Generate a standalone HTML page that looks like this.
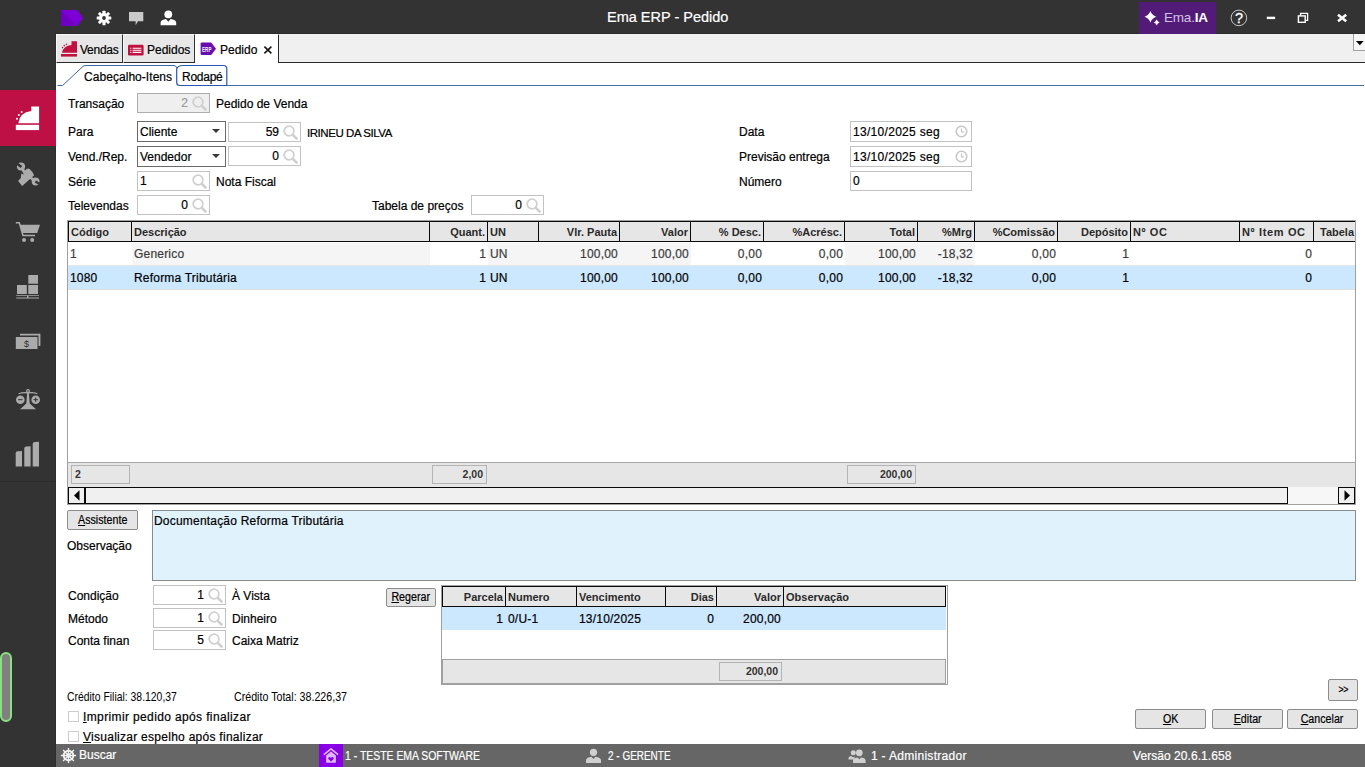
<!DOCTYPE html>
<html lang="pt-BR">
<head>
<meta charset="utf-8">
<title>Ema ERP - Pedido</title>
<style>
*{box-sizing:border-box;margin:0;padding:0}
html,body{width:1365px;height:767px;overflow:hidden;background:#fff}
body{position:relative;font-family:"Liberation Sans",sans-serif;font-size:12px;color:#000;-webkit-text-stroke:.2px}
.a{position:absolute}
.t{position:absolute;white-space:nowrap;line-height:16px;height:16px}
.titlebar{left:0;top:0;width:1365px;height:34px;background:#333}
.sidebar{left:0;top:0;width:56px;height:767px;background:#333}
.tabbar{left:56px;top:34px;width:1309px;height:29px;background:#f0f0f0;border-bottom:1px solid #2a2a2a}
.tab{position:absolute;top:34px;height:29px;background:#e7e7e7;border-top:1px solid #f8f8f8;border-left:1px solid #f8f8f8;border-right:1px solid #333;border-bottom:1px solid #2a2a2a;font-size:12px;line-height:30px;white-space:nowrap;color:#000}
.tab.on{background:#fff;border-bottom:none;border-top-color:#fff;border-left:none;border-right:1px solid #2a2a2a;height:29px}
.inp{position:absolute;height:20px;border:1px solid #c2c2c2;background:#fff;font-size:12px;line-height:19px;white-space:nowrap}
.inp.r{text-align:right;padding-right:21px}
.inp.l{padding-left:2px}
.sel{position:absolute;height:21px;border:1px solid #6a6a6a;background:#fff;line-height:21px;padding-left:2px;white-space:nowrap}
.mag{position:absolute;right:2px;top:2px;width:15px;height:15px}
.btn{position:absolute;background:#e5e5e5;border:1px solid #8c8c8c;border-radius:2px;text-align:center;font-size:12px;white-space:nowrap}
.btn span{display:inline-block;transform:scaleX(.89)}
.btn u{text-decoration:underline}
.hd,.hd2,b{-webkit-text-stroke:0}
.hd{position:absolute;top:222px;height:19px;background:#e6e6e6;font-weight:bold;font-size:11px;letter-spacing:0;color:#2a2a2a;line-height:20px;white-space:nowrap;overflow:hidden}
.hd.r{text-align:right;padding-right:2px}.c.r{text-align:right;padding-right:2px}
.hd.l{padding-left:2px}.c.l{padding-left:2px}
.c{position:absolute;height:23px;line-height:23px;white-space:nowrap;overflow:hidden;letter-spacing:.2px}
.g{background:#f5f5f5}
.hd2{position:absolute;top:587px;height:19px;background:#e6e6e6;border-right:1px solid #0a0a0a;font-weight:bold;font-size:11px;letter-spacing:0;color:#2a2a2a;line-height:20px;white-space:nowrap}
.sb{position:absolute;top:744px;height:23px;line-height:24px;color:#fff;white-space:nowrap;font-size:12px;transform-origin:0 50%}
</style>
</head>
<body>
<!-- chrome -->
<div class="a titlebar"></div>
<div class="a sidebar"></div>
<div class="a" style="left:0;top:481px;width:56px;height:1px;background:#2c2c2c"></div>
<div class="a" style="left:55px;top:33px;width:1310px;height:1px;background:#2c2c2c"></div>
<div class="a" style="left:55px;top:33px;width:1px;height:734px;background:#2e2e2e"></div>
<div class="a" style="left:0;top:90px;width:56px;height:56px;background:#be1044"></div>
<div class="a" style="left:0;top:652px;width:12px;height:70px;background:#808080;border:2px solid #88e080;border-radius:6px"></div>

<div class="t" style="left:607px;top:8px;width:121px;text-align:center;color:#fff;font-size:14.5px;line-height:18px;height:18px;letter-spacing:0">Ema ERP - Pedido</div>

<!-- tab bar -->
<div class="a tabbar"></div>
<div class="tab" style="left:56px;width:67px;padding-left:23px;letter-spacing:-.25px">Vendas</div>
<div class="tab" style="left:123px;width:72px;padding-left:23px">Pedidos</div>
<div class="tab on" style="left:195px;width:84px;padding-left:25px">Pedido</div>


<!-- status bar -->
<div class="a" style="left:56px;top:744px;width:1309px;height:23px;background:#666"></div>
<div class="a" style="left:319px;top:744px;width:24px;height:23px;background:#8a00e6"></div>
<div class="sb" style="left:79px;line-height:23px">Buscar</div>
<div class="sb" style="left:345px;transform:scaleX(.869)">1 - TESTE EMA SOFTWARE</div>
<div class="sb" style="left:608px;transform:scaleX(.83)">2 - GERENTE</div>
<div class="sb" style="left:871px;letter-spacing:.3px">1 - Administrador</div>
<div class="sb" style="left:1133px;letter-spacing:.06px">Versão 20.6.1.658</div>

<!-- sub tabs -->
<svg class="a" style="left:56px;top:64px" width="1309" height="23" viewBox="0 0 1309 23">
<path d="M170.800 21.500H1308" stroke="#4a6ea8" stroke-width="1" fill="none"/>
<path d="M1.500 21.500H6.600L26.500 2.800Q27.800 1.500 30 1.500H118Q120 1.500 120.700 4" stroke="#3f66a6" stroke-width="1" fill="none"/>
<path d="M127 1.500Q121.500 1.500 120.700 5V18.500Q120.700 21.500 123.700 21.500H170.800V5Q170.800 1.500 167.500 1.500Z" stroke="#2555b5" stroke-width="1.200" fill="none"/>
</svg>
<div class="t" style="left:84px;top:69px;letter-spacing:.05px">Cabeçalho-Itens</div>
<div class="t" style="left:182px;top:69px;letter-spacing:-.25px">Rodapé</div>

<!-- header form -->
<div class="t" style="left:68px;top:96px">Transação</div>
<div class="inp r" style="left:137px;top:93px;width:73px;background:#efefef;border-color:#adadad;color:#9a9a9a">2<svg class="mag" viewBox="0 0 14 14"><circle cx="5.600" cy="5.600" r="4.500" fill="none" stroke="#d0d0d0" stroke-width="1.700"/><path d="M9.200 9.200L12.600 12.600" stroke="#d0d0d0" stroke-width="2.500" stroke-linecap="round"/></svg></div>
<div class="t" style="left:216px;top:96px">Pedido de Venda</div>

<div class="t" style="left:68px;top:124px">Para</div>
<div class="sel" style="left:137px;top:121px;width:89px">Cliente<svg class="a" style="right:5px;top:7px" width="8" height="4" viewBox="0 0 8 4"><path d="M0 0H8L4 4Z" fill="#3a3a3a"/></svg></div>
<div class="inp r" style="left:228px;top:122px;width:73px">59<svg class="mag" viewBox="0 0 14 14"><circle cx="5.600" cy="5.600" r="4.500" fill="none" stroke="#d0d0d0" stroke-width="1.700"/><path d="M9.200 9.200L12.600 12.600" stroke="#d0d0d0" stroke-width="2.500" stroke-linecap="round"/></svg></div>
<div class="t" style="left:307px;top:125px;font-size:11.500px;letter-spacing:-.45px">IRINEU DA SILVA</div>

<div class="t" style="left:68px;top:149px">Vend./Rep.</div>
<div class="sel" style="left:137px;top:146px;width:89px">Vendedor<svg class="a" style="right:5px;top:7px" width="8" height="4" viewBox="0 0 8 4"><path d="M0 0H8L4 4Z" fill="#3a3a3a"/></svg></div>
<div class="inp r" style="left:228px;top:146px;width:73px">0<svg class="mag" viewBox="0 0 14 14"><circle cx="5.600" cy="5.600" r="4.500" fill="none" stroke="#d0d0d0" stroke-width="1.700"/><path d="M9.200 9.200L12.600 12.600" stroke="#d0d0d0" stroke-width="2.500" stroke-linecap="round"/></svg></div>

<div class="t" style="left:68px;top:174px">Série</div>
<div class="inp l" style="left:137px;top:171px;width:73px">1<svg class="mag" viewBox="0 0 14 14"><circle cx="5.600" cy="5.600" r="4.500" fill="none" stroke="#d0d0d0" stroke-width="1.700"/><path d="M9.200 9.200L12.600 12.600" stroke="#d0d0d0" stroke-width="2.500" stroke-linecap="round"/></svg></div>
<div class="t" style="left:216px;top:174px">Nota Fiscal</div>

<div class="t" style="left:68px;top:198px">Televendas</div>
<div class="inp r" style="left:137px;top:195px;width:73px">0<svg class="mag" viewBox="0 0 14 14"><circle cx="5.600" cy="5.600" r="4.500" fill="none" stroke="#d0d0d0" stroke-width="1.700"/><path d="M9.200 9.200L12.600 12.600" stroke="#d0d0d0" stroke-width="2.500" stroke-linecap="round"/></svg></div>
<div class="t" style="left:372px;top:198px">Tabela de preços</div>
<div class="inp r" style="left:471px;top:195px;width:73px">0<svg class="mag" viewBox="0 0 14 14"><circle cx="5.600" cy="5.600" r="4.500" fill="none" stroke="#d0d0d0" stroke-width="1.700"/><path d="M9.200 9.200L12.600 12.600" stroke="#d0d0d0" stroke-width="2.500" stroke-linecap="round"/></svg></div>

<div class="t" style="left:739px;top:124px">Data</div>
<div class="inp l" style="left:850px;top:121px;width:122px;height:21px;line-height:20px;letter-spacing:.3px">13/10/2025 seg<svg class="mag" style="right:3px;top:3px;width:13px;height:13px" viewBox="0 0 13 13"><circle cx="6.500" cy="6.500" r="5.300" fill="none" stroke="#c6c6c6" stroke-width="1.500"/><path d="M6.500 3.600V6.900H9.200" fill="none" stroke="#c6c6c6" stroke-width="1.200"/></svg></div>
<div class="t" style="left:739px;top:149px">Previsão entrega</div>
<div class="inp l" style="left:850px;top:146px;width:122px;height:21px;line-height:20px;letter-spacing:.3px">13/10/2025 seg<svg class="mag" style="right:3px;top:3px;width:13px;height:13px" viewBox="0 0 13 13"><circle cx="6.500" cy="6.500" r="5.300" fill="none" stroke="#c6c6c6" stroke-width="1.500"/><path d="M6.500 3.600V6.900H9.200" fill="none" stroke="#c6c6c6" stroke-width="1.200"/></svg></div>
<div class="t" style="left:739px;top:174px">Número</div>
<div class="inp l" style="left:850px;top:171px;width:122px">0</div>

<!-- items grid -->
<div class="a" style="left:67px;top:220px;width:1289px;height:267px;border:1px solid #a0a0a0;background:#fff"></div>
<div class="a" style="left:68px;top:221px;width:1287px;height:21px;background:#0a0a0a"></div>
<div class="hd l" style="left:69px;width:62px">Código</div>
<div class="hd l" style="left:132px;width:297px">Descrição</div>
<div class="hd r" style="left:430px;width:57px">Quant.</div>
<div class="hd l" style="left:488px;width:50px">UN</div>
<div class="hd r" style="left:539px;width:80px">Vlr. Pauta</div>
<div class="hd r" style="left:620px;width:70px">Valor</div>
<div class="hd r" style="left:691px;width:72px">% Desc.</div>
<div class="hd r" style="left:764px;width:80px">%Acrésc.</div>
<div class="hd r" style="left:845px;width:72px">Total</div>
<div class="hd r" style="left:918px;width:56px">%Mrg</div>
<div class="hd r" style="left:975px;width:82px">%Comissão</div>
<div class="hd r" style="left:1058px;width:72px">Depósito</div>
<div class="hd l" style="left:1131px;width:108px;letter-spacing:.6px">Nº OC</div>
<div class="hd l" style="left:1240px;width:73px;letter-spacing:.65px">Nº Item OC</div>
<div class="hd l" style="left:1314px;width:41px;padding-left:6px">Tabela</div>
<div class="a" style="left:68px;top:265px;width:1287px;height:1px;background:#e6e6e6"></div>
<div class="a" style="left:68px;top:266px;width:1287px;height:23px;background:#cce8ff"></div>
<div class="a" style="left:68px;top:289px;width:1287px;height:1px;background:#dedede"></div>
<div class="c l" style="left:68px;top:243px;width:64px;height:22px;line-height:23px;color:#3c3c3c">1</div>
<div class="c l g" style="left:132px;top:243px;width:298px;height:22px;line-height:23px;color:#3c3c3c">Generico</div>
<div class="c r" style="left:430px;top:243px;width:58px;height:22px;line-height:23px;color:#3c3c3c">1</div>
<div class="c l g" style="left:488px;top:243px;width:51px;height:22px;line-height:23px;color:#3c3c3c">UN</div>
<div class="c r g" style="left:539px;top:243px;width:81px;height:22px;line-height:23px;color:#3c3c3c">100,00</div>
<div class="c r g" style="left:620px;top:243px;width:71px;height:22px;line-height:23px;color:#3c3c3c">100,00</div>
<div class="c r" style="left:691px;top:243px;width:73px;height:22px;line-height:23px;color:#3c3c3c">0,00</div>
<div class="c r" style="left:764px;top:243px;width:81px;height:22px;line-height:23px;color:#3c3c3c">0,00</div>
<div class="c r g" style="left:845px;top:243px;width:73px;height:22px;line-height:23px;color:#3c3c3c">100,00</div>
<div class="c r g" style="left:918px;top:243px;width:57px;height:22px;line-height:23px;color:#3c3c3c">-18,32</div>
<div class="c r" style="left:975px;top:243px;width:83px;height:22px;line-height:23px;color:#3c3c3c">0,00</div>
<div class="c r" style="left:1058px;top:243px;width:73px;height:22px;line-height:23px;color:#3c3c3c">1</div>
<div class="c r" style="left:1240px;top:243px;width:74px;height:22px;line-height:23px;color:#3c3c3c">0</div>
<div class="c l" style="left:68px;top:266px;width:64px;height:23px;line-height:24px">1080</div>
<div class="c l" style="left:132px;top:266px;width:298px;height:23px;line-height:24px">Reforma Tributária</div>
<div class="c r" style="left:430px;top:266px;width:58px;height:23px;line-height:24px">1</div>
<div class="c l" style="left:488px;top:266px;width:51px;height:23px;line-height:24px">UN</div>
<div class="c r" style="left:539px;top:266px;width:81px;height:23px;line-height:24px">100,00</div>
<div class="c r" style="left:620px;top:266px;width:71px;height:23px;line-height:24px">100,00</div>
<div class="c r" style="left:691px;top:266px;width:73px;height:23px;line-height:24px">0,00</div>
<div class="c r" style="left:764px;top:266px;width:81px;height:23px;line-height:24px">0,00</div>
<div class="c r" style="left:845px;top:266px;width:73px;height:23px;line-height:24px">100,00</div>
<div class="c r" style="left:918px;top:266px;width:57px;height:23px;line-height:24px">-18,32</div>
<div class="c r" style="left:975px;top:266px;width:83px;height:23px;line-height:24px">0,00</div>
<div class="c r" style="left:1058px;top:266px;width:73px;height:23px;line-height:24px">1</div>
<div class="c r" style="left:1240px;top:266px;width:74px;height:23px;line-height:24px">0</div>
<div class="a" style="left:68px;top:462px;width:1287px;height:25px;background:#e6e6e6;border-top:1px solid #a8a8a8"></div>
<div class="a" style="left:71px;top:465px;width:59px;height:19px;border:1px solid #b4b4b4;background:#e6e6e6;font-weight:bold;font-size:10.500px;-webkit-text-stroke:0;line-height:17px;color:#333;text-align:left;padding:0 3px">2</div>
<div class="a" style="left:432px;top:465px;width:55px;height:19px;border:1px solid #b4b4b4;background:#e6e6e6;font-weight:bold;font-size:10.500px;-webkit-text-stroke:0;line-height:17px;color:#333;text-align:right;padding:0 3px">2,00</div>
<div class="a" style="left:847px;top:465px;width:69px;height:19px;border:1px solid #b4b4b4;background:#e6e6e6;font-weight:bold;font-size:10.500px;-webkit-text-stroke:0;line-height:17px;color:#333;text-align:right;padding:0 3px">200,00</div>
<div class="a" style="left:67px;top:487px;width:1289px;height:18px;background:#a0a0a0"></div>
<div class="a" style="left:68px;top:487px;width:1287px;height:17px;background:#0a0a0a"></div>
<div class="a" style="left:69px;top:488px;width:15px;height:15px;background:#f0f0f0"></div>
<svg class="a" style="left:74px;top:490px" width="6" height="11" viewBox="0 0 6 11"><path d="M5.500 .3V10.700L0 5.500Z" fill="#000"/></svg>
<div class="a" style="left:86px;top:488px;width:1201px;height:15px;background:#f0f0f0"></div>
<div class="a" style="left:1288px;top:487px;width:50px;height:17px;background:#f7f7f7"></div>
<div class="a" style="left:1339px;top:488px;width:15px;height:15px;background:#f0f0f0"></div>
<svg class="a" style="left:1344px;top:490px" width="6" height="11" viewBox="0 0 6 11"><path d="M.5 .3V10.700L6 5.500Z" fill="#000"/></svg>
<!-- lower -->
<div class="btn" style="left:67px;top:510px;width:71px;height:20px;line-height:18px"><span><u>A</u>ssistente</span></div>
<div class="t" style="left:67px;top:538px">Observação</div>
<div class="a" style="left:152px;top:510px;width:1204px;height:71px;border:1px solid #8a8a8a;background:#e0f2fc;padding:2px 1px;line-height:17px;white-space:nowrap;letter-spacing:.2px">Documentação Reforma Tributária</div>
<div class="t" style="left:68px;top:588px">Condição</div>
<div class="inp r" style="left:153px;top:585px;width:73px">1<svg class="mag" viewBox="0 0 14 14"><circle cx="5.600" cy="5.600" r="4.500" fill="none" stroke="#d0d0d0" stroke-width="1.700"/><path d="M9.200 9.200L12.600 12.600" stroke="#d0d0d0" stroke-width="2.500" stroke-linecap="round"/></svg></div>
<div class="t" style="left:232px;top:588px">À Vista</div>
<div class="t" style="left:68px;top:611px">Método</div>
<div class="inp r" style="left:153px;top:608px;width:73px">1<svg class="mag" viewBox="0 0 14 14"><circle cx="5.600" cy="5.600" r="4.500" fill="none" stroke="#d0d0d0" stroke-width="1.700"/><path d="M9.200 9.200L12.600 12.600" stroke="#d0d0d0" stroke-width="2.500" stroke-linecap="round"/></svg></div>
<div class="t" style="left:232px;top:611px">Dinheiro</div>
<div class="t" style="left:68px;top:633px">Conta finan</div>
<div class="inp r" style="left:153px;top:630px;width:73px">5<svg class="mag" viewBox="0 0 14 14"><circle cx="5.600" cy="5.600" r="4.500" fill="none" stroke="#d0d0d0" stroke-width="1.700"/><path d="M9.200 9.200L12.600 12.600" stroke="#d0d0d0" stroke-width="2.500" stroke-linecap="round"/></svg></div>
<div class="t" style="left:232px;top:633px">Caixa Matriz</div>
<div class="btn" style="left:386px;top:588px;width:50px;height:19px;line-height:17px"><span><u>R</u>egerar</span></div>
<div class="a" style="left:441px;top:585px;width:507px;height:100px;border:1px solid #a0a0a0;background:#fff"></div>
<div class="a" style="left:442px;top:586px;width:504px;height:21px;background:#0a0a0a"></div>
<div class="hd2 r" style="left:443px;width:63px;text-align:right;padding-right:2px">Parcela</div>
<div class="hd2 l" style="left:506px;width:71px;padding-left:2px">Numero</div>
<div class="hd2 l" style="left:577px;width:89px;padding-left:2px">Vencimento</div>
<div class="hd2 r" style="left:666px;width:51px;text-align:right;padding-right:2px">Dias</div>
<div class="hd2 r" style="left:717px;width:67px;text-align:right;padding-right:2px">Valor</div>
<div class="hd2 l" style="left:784px;width:161px;border-right:none;padding-left:2px">Observação</div>
<div class="a" style="left:442px;top:607px;width:504px;height:23px;background:#cce8ff"></div>
<div class="c r" style="left:443px;top:608px;width:62px;height:22px;line-height:22px">1</div>
<div class="c l" style="left:506px;top:608px;width:70px;height:22px;line-height:22px">0/U-1</div>
<div class="c l" style="left:577px;top:608px;width:88px;height:22px;line-height:22px">13/10/2025</div>
<div class="c r" style="left:666px;top:608px;width:50px;height:22px;line-height:22px">0</div>
<div class="c r" style="left:717px;top:608px;width:66px;height:22px;line-height:22px">200,00</div>
<div class="a" style="left:442px;top:659px;width:504px;height:25px;background:#e6e6e6;border:1px solid #a0a0a0"></div>
<div class="a" style="left:719px;top:662px;width:63px;height:19px;border:1px solid #b4b4b4;background:#e6e6e6;font-weight:bold;font-size:10.500px;-webkit-text-stroke:0;line-height:17px;color:#333;text-align:right;padding:0 3px;letter-spacing:0">200,00</div>
<div class="t" style="left:67px;top:689px;font-size:13px;letter-spacing:0;-webkit-text-stroke:0;transform-origin:0 50%;transform:scaleX(.8)">Crédito Filial: 38.120,37</div>
<div class="t" style="left:234px;top:689px;font-size:13px;letter-spacing:0;-webkit-text-stroke:0;transform-origin:0 50%;transform:scaleX(.82)">Crédito Total: 38.226,37</div>
<div class="a" style="left:68px;top:711px;width:11px;height:11px;border:1px solid #cdcdcd;background:#fff"></div>
<div class="t" style="left:83px;top:709px;letter-spacing:.37px"><u>I</u>mprimir pedido após finalizar</div>
<div class="a" style="left:68px;top:731px;width:11px;height:11px;border:1px solid #cdcdcd;background:#fff"></div>
<div class="t" style="left:83px;top:729px;letter-spacing:.27px"><u>V</u>isualizar espelho após finalizar</div>
<div class="btn" style="left:1328px;top:679px;width:30px;height:22px;line-height:20px;font-size:10px;letter-spacing:-.5px"><span>&gt;&gt;</span></div>
<div class="btn" style="left:1135px;top:709px;width:71px;height:20px;line-height:18px"><span><u>O</u>K</span></div>
<div class="btn" style="left:1212px;top:709px;width:71px;height:20px;line-height:18px"><span><u>E</u>ditar</span></div>
<div class="btn" style="left:1287px;top:709px;width:71px;height:20px;line-height:18px"><span><u>C</u>ancelar</span></div>

<!-- title bar icons -->
<svg class="a" style="left:56px;top:0" width="140" height="34" viewBox="56 0 140 34">
<path d="M61 10H77.300L83.300 18L77.300 26H61Z" fill="#7d00d6"/>
<path d="M61 10L77 26H61Z" fill="#6f00c2"/>
<g transform="translate(104 18)" fill="#fff">
<circle r="4.900"/>
<g id="tt"><rect x="-1.500" y="-7.300" width="3" height="14.600" rx=".6"/></g>
<rect x="-1.500" y="-7.300" width="3" height="14.600" rx=".6" transform="rotate(45)"/>
<rect x="-1.500" y="-7.300" width="3" height="14.600" rx=".6" transform="rotate(90)"/>
<rect x="-1.500" y="-7.300" width="3" height="14.600" rx=".6" transform="rotate(135)"/>
<circle r="1.900" fill="#333"/>
</g>
<path d="M129 12H143.300V21.300H138L135.600 25.200V21.300H129Z" fill="#c9c9c9"/>
<circle cx="168.300" cy="14.300" r="3.900" fill="#fff"/>
<path d="M160.600 25.200V22.800Q160.600 20.300 164 19.500L166 19L168.300 21.800L170.600 19L172.600 19.500Q176.200 20.300 176.200 22.800V25.200Z" fill="#fff"/>
</svg>
<!-- Ema.IA -->
<div class="a" style="left:1139px;top:2px;width:77px;height:32px;background:#521b78"></div>
<svg class="a" style="left:1143px;top:9px" width="18" height="18" viewBox="1143 9 18 18">
<path d="M1150.400 11.000Q1151.900 15.300 1156.200 16.800Q1151.900 18.300 1150.400 22.600Q1148.900 18.300 1144.600 16.800Q1148.900 15.300 1150.400 11.000Z" fill="#fff"/>
<path d="M1156.700 19.600Q1157.500 21.700 1159.600 22.500Q1157.500 23.300 1156.700 25.400Q1155.900 23.300 1153.800 22.500Q1155.900 21.700 1156.700 19.600Z" fill="#fff"/>
</svg>
<div class="t" style="left:1164px;top:9px;font-size:13.500px;line-height:18px;height:18px;color:#d2c0e4;-webkit-text-stroke:0;letter-spacing:-.2px">Ema.<b style="color:#fff">IA</b></div>
<svg class="a" style="left:1225px;top:4px" width="130" height="28" viewBox="1225 4 130 28">
<circle cx="1238.900" cy="17.900" r="7.800" fill="none" stroke="#c8c8c8" stroke-width="1"/>
<rect x="1266.800" y="16.700" width="8.300" height="2.400" fill="#fff"/>
<path d="M1300.600 15.400V13.400H1307.600V20.400H1305.600" fill="none" stroke="#fff" stroke-width="1.300"/>
<rect x="1298.400" y="15.900" width="6.800" height="6.400" fill="none" stroke="#fff" stroke-width="1.400"/>
<path d="M1338 14.800L1346.200 21.300M1346.200 14.800L1338 21.300" stroke="#fff" stroke-width="2.600" fill="none"/>
</svg>
<div class="t" style="left:1233px;top:9px;width:12px;text-align:center;color:#fff;font-size:14.500px;line-height:18px;height:18px;-webkit-text-stroke:.3px">?</div>
<!-- tabbar dropdown -->
<div class="a" style="left:1353px;top:34px;width:13px;height:17px;background:#f6f6f6;border:1px solid #a0a0a0;border-top:none"></div>
<svg class="a" style="left:1356px;top:41px" width="8" height="5" viewBox="0 0 8 5"><path d="M0 0H7.600L3.800 4.200Z" fill="#000"/></svg>

<!-- tab icons -->
<svg class="a" style="left:60px;top:40px" width="18" height="18" viewBox="60 40 18 18">
<rect x="61" y="54" width="16" height="2.600" fill="#c0113f"/>
<path d="M62 52.800Q63 46 71.500 45V41.200H77V52.800Z" fill="#c0113f"/>
<circle cx="62.600" cy="47.600" r=".8" fill="#c0113f"/><circle cx="64.300" cy="45.600" r=".8" fill="#c0113f"/><circle cx="66.500" cy="44.200" r=".8" fill="#c0113f"/>
</svg>
<svg class="a" style="left:128px;top:44px" width="16" height="12" viewBox="0 0 16 12">
<rect x="0" y=".8" width="15.600" height="10.800" rx="1.300" fill="#c0113f"/>
<path d="M2.300 4.200H3.300M4.600 4.200H13.400M2.300 6.300H3.300M4.600 6.300H13.400M2.300 8.400H3.300M4.600 8.400H13.400" stroke="#fff" stroke-width="1.100"/>
</svg>
<svg class="a" style="left:199.700px;top:42px" width="17" height="14" viewBox="0 0 17 14">
<path d="M1.800 .6H11.200L16 6.800L11.200 13H1.800Q.600 13 .600 11.800V1.800Q.600 .600 1.800 .600Z" fill="#6a0dad"/>
<text x="2" y="10" font-family="Liberation Sans, sans-serif" font-size="8" font-weight="bold" fill="#f4eaff" textLength="9.500" lengthAdjust="spacingAndGlyphs">ERP</text>
</svg>
<svg class="a" style="left:263px;top:45px" width="10" height="10" viewBox="0 0 10 10"><path d="M1.400 1.600L8.400 8.400M8.400 1.600L1.400 8.400" stroke="#111" stroke-width="1.500"/></svg>

<!-- sidebar icons -->
<svg class="a" style="left:0;top:90px" width="56" height="400" viewBox="0 90 56 400">
<g fill="#fff">
<rect x="15.800" y="124.800" width="23.300" height="5.300"/>
<path d="M18.300 123.300Q19.500 112.500 31.300 111V106.500H39.100V123.300Z"/>
<circle cx="17" cy="118.800" r="1"/><circle cx="18.800" cy="115" r="1"/><circle cx="21.600" cy="112" r="1"/>
</g>
<g fill="#ababab">
<!-- tools -->
<circle cx="21" cy="166.500" r="4.100"/>
<path d="M22.300 168.500L25 173.500" stroke="#ababab" stroke-width="2.800" fill="none"/>
<path d="M21.300 173.600L23.800 174.600L25.200 170.200Q27.600 167.300 29.800 169.200Q33.200 172 34.100 175.300L30.600 178.600L22.200 186.100L18.100 181L20.800 178Z"/>
<path d="M30.500 177.500L34 180.500" stroke="#ababab" stroke-width="2.800" fill="none"/>
<circle cx="35.600" cy="181.500" r="3.900"/>
<!-- cart -->
<path d="M15.800 222H19.800L20.700 224.800H40L37.200 233H23L23.600 234.700H35V236.300H22.400L18.700 223.600H15.800Z"/>
<circle cx="24" cy="240" r="2"/><circle cx="32.200" cy="240" r="2"/>
<!-- boxes -->
<rect x="28.300" y="275" width="9.700" height="8.700"/>
<rect x="17" y="285" width="9.800" height="9"/>
<rect x="28.300" y="285" width="9.700" height="9"/>
<path d="M16.200 295.200H39V296.100H16.200ZM16.200 297.500H39V298.400H16.200ZM27 295.200H28.500V298.400H27Z"/>
<!-- money -->
<rect x="15.800" y="337" width="21.700" height="12"/>
<path d="M20 333.800H40.400V346H38.500V335.600H20Z"/>
<!-- scales -->
<circle cx="28" cy="391" r="2"/>
<path d="M18.500 393.200Q23 391.500 28 392.300Q33 391.500 37.500 393.200V394.300Q33 392.800 28.900 393.600L29.700 403.500L36 409.300H20L26.300 403.500L27.100 393.600Q23 392.800 18.500 394.300Z"/>
<circle cx="20.300" cy="399.700" r="4.300"/><circle cx="35.700" cy="399.700" r="4.300"/>
<!-- bars -->
<path d="M15.700 466.600V453.300Q15.700 451.500 17.800 451.300L22 451V466.600Z"/>
<path d="M24.300 466.600V448.600Q24.300 446.800 26.400 446.600L30.600 446.300V466.600Z"/>
<path d="M32.700 466.600V444Q32.700 442.200 34.800 442L39 441.700V466.600Z"/>
</g>
<rect x="-1.300" y="-5.500" width="2.600" height="5.800" fill="#333" transform="translate(21.200 166.800) rotate(-52)"/>
<rect x="-1.200" y="-5.500" width="2.400" height="5.500" fill="#333" transform="translate(35.400 181.400) rotate(122)"/>
<circle cx="28" cy="391" r=".8" fill="#333"/>
<path d="M18.100 399.700H22.500M33.500 399.700H37.900M35.700 397.500V401.900" stroke="#333" stroke-width="1"/>
<text x="26.600" y="346.600" text-anchor="middle" font-family="Liberation Sans, sans-serif" font-size="9" fill="#333">$</text>
</svg>

<!-- status icons -->
<svg class="a" style="left:60px;top:747px" width="17" height="17" viewBox="-8.500 -8.500 17 17">
<g stroke="#f0f0f0" fill="none"><circle r="4.800" stroke-width="2"/><circle r="1.600" stroke-width="1.200"/>
<path d="M0 -7.600V7.600M-7.600 0H7.600M-5.400 -5.400L5.400 5.400M5.400 -5.400L-5.400 5.400" stroke-width="1.400"/></g>
</svg>
<svg class="a" style="left:323px;top:748px" width="16" height="16" viewBox="0 1 18 18">
<path d="M1 8.500L9 2L17 8.500" fill="none" stroke="#dcb8ff" stroke-width="1.800"/>
<path d="M3.500 9.500L9 5L14.500 9.500V17.500H3.500Z" fill="#dcb8ff"/>
<path d="M9 16.300L6 13.300Q5.200 11.300 7.200 11Q8.500 11 9 12.200Q9.500 11 10.800 11Q12.800 11.300 12 13.300Z" fill="#8a00e6"/>
</svg>
<svg class="a" style="left:585px;top:748px" width="17" height="16" viewBox="0 0 17 16">
<circle cx="8.500" cy="4.300" r="3.600" fill="#d0d0d0"/>
<path d="M1 15V12.500Q1 10 4.500 9.300L6.500 8.800L8.500 11L10.500 8.800L12.500 9.300Q16 10 16 12.500V15Z" fill="#d0d0d0"/>
</svg>
<svg class="a" style="left:848px;top:748px" width="18" height="16" viewBox="0 0 18 16">
<circle cx="5.300" cy="4.800" r="2.500" fill="#d0d0d0"/>
<path d="M.5 11.500V10Q.5 8.300 3 7.900L5.300 9.500L7 8.200L6 11.500Z" fill="#d0d0d0"/>
<circle cx="11.300" cy="4.800" r="3.400" fill="#d0d0d0"/>
<path d="M5 15V12.800Q5 10.500 8 9.800L9.500 9.400L11.300 11.300L13.100 9.400L14.600 9.800Q17.600 10.500 17.600 12.800V15Z" fill="#d0d0d0"/>
</svg>

</body>
</html>
